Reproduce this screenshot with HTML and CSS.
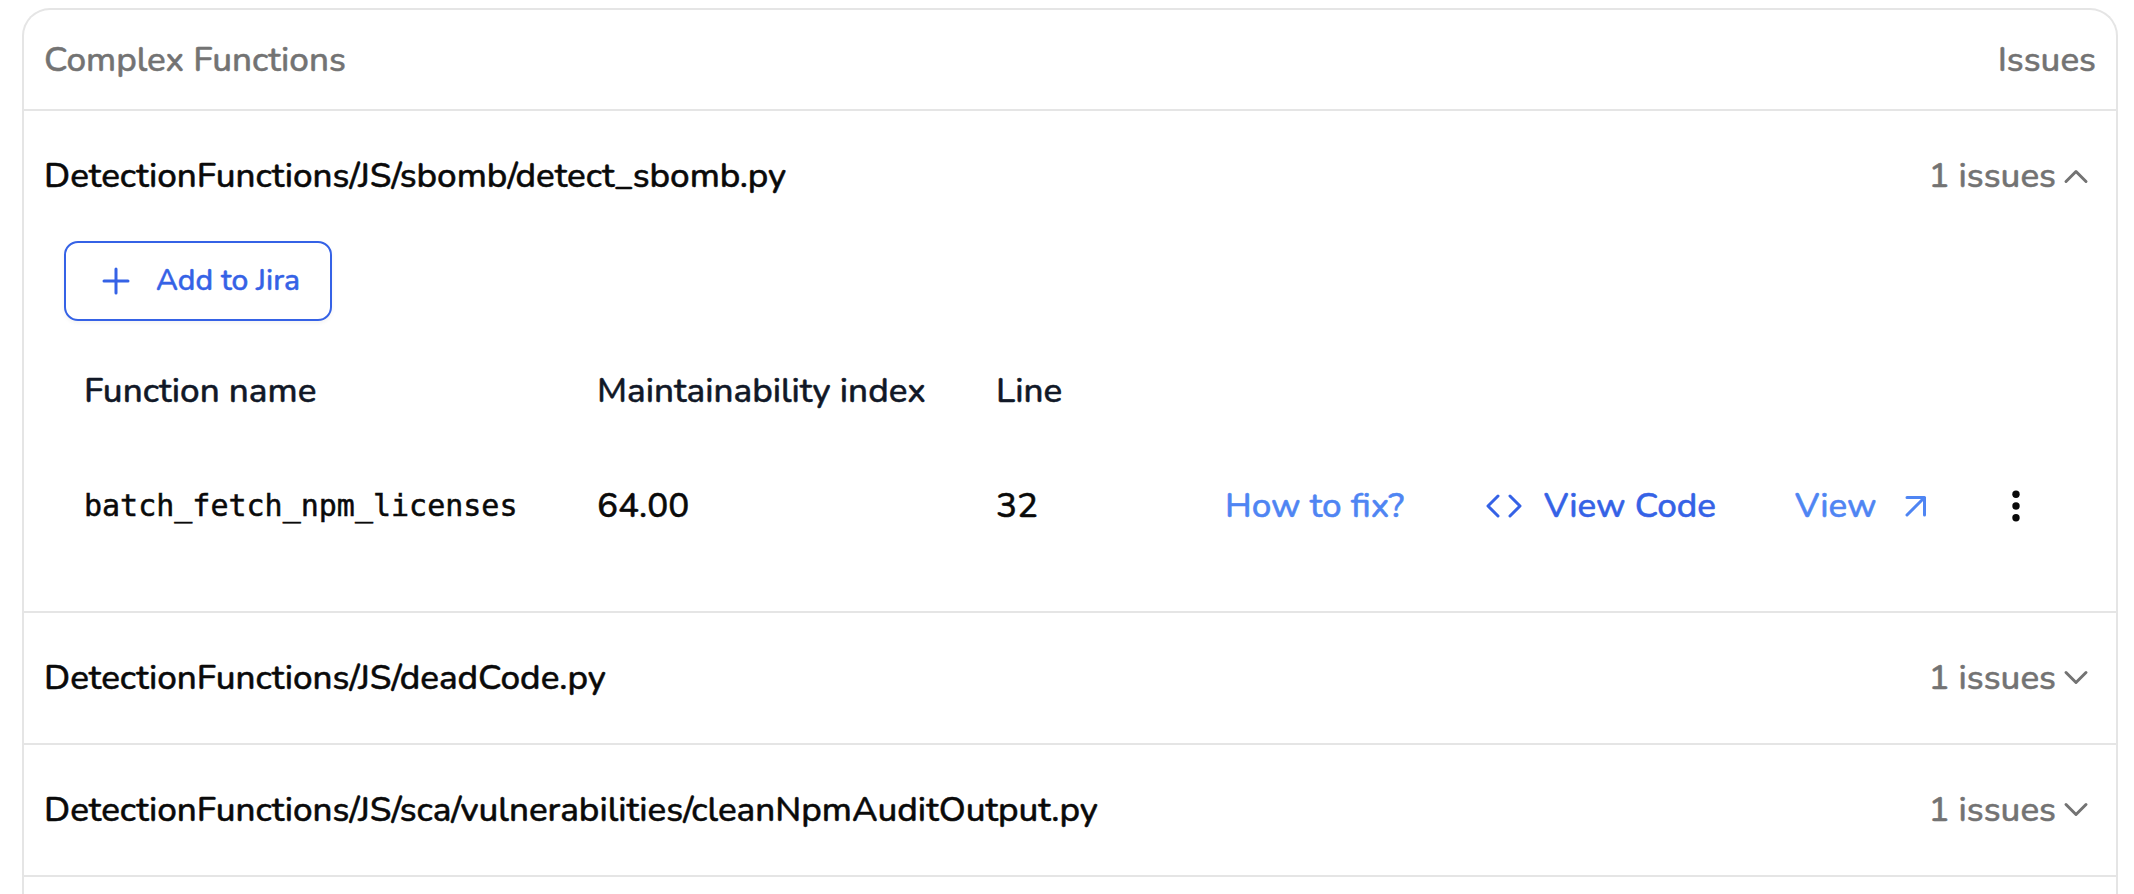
FILE: index.html
```html
<!DOCTYPE html>
<html lang="en">
<head>
    <meta charset="UTF-8">
    <meta name="viewport" content="width=device-width, initial-scale=1.0">
    <title>Complex Functions</title>
    <link rel="stylesheet" href="styles.css">
</head>
<body>
    <div class="card">
        <div class="card-header">
            <span>Complex Functions</span>
            <span>Issues</span>
        </div>

        <div class="file open">
            <div class="file-row">
                <span class="file-name">DetectionFunctions/JS/sbomb/detect_sbomb.py</span>
                <span class="issue-count">1 issues
                    <svg class="chevron" viewBox="0 0 32 32"><path d="M6 21.5 L16 11.5 L26 21.5"/></svg>
                </span>
            </div>
            <div class="file-body">
                <button class="jira-btn">
                    <svg class="plus" viewBox="0 0 28 28"><path d="M14 2V26M2 14H26"/></svg>
                    <span>Add to Jira</span>
                </button>
                <div class="grid grid-head">
                    <span>Function name</span>
                    <span>Maintainability index</span>
                    <span>Line</span>
                </div>
                <div class="grid grid-row">
                    <code>batch_fetch_npm_licenses</code>
                    <span>64.00</span>
                    <span>32</span>
                    <a class="link fix">How to fix?</a>
                    <a class="link code">
                        <svg class="code-icon" viewBox="0 0 38 26"><path d="M13 3L3 13L13 23M25 3L35 13L25 23"/></svg>
                        View Code
                    </a>
                    <a class="link view">View
                        <svg class="arrow" viewBox="0 0 22 22"><path d="M2 2.5H19.5V20M19.5 2.5L2 20"/></svg>
                    </a>
                    <svg class="dots" viewBox="0 0 8 32"><circle cx="4" cy="4.3" r="3.7"/><circle cx="4" cy="16" r="3.7"/><circle cx="4" cy="27.7" r="3.7"/></svg>
                </div>
            </div>
        </div>

        <div class="file">
            <div class="file-row">
                <span class="file-name">DetectionFunctions/JS/deadCode.py</span>
                <span class="issue-count">1 issues
                    <svg class="chevron" viewBox="0 0 32 32"><path d="M6 10.5 L16 20.5 L26 10.5"/></svg>
                </span>
            </div>
        </div>

        <div class="file">
            <div class="file-row">
                <span class="file-name">DetectionFunctions/JS/sca/vulnerabilities/cleanNpmAuditOutput.py</span>
                <span class="issue-count">1 issues
                    <svg class="chevron" viewBox="0 0 32 32"><path d="M6 10.5 L16 20.5 L26 10.5"/></svg>
                </span>
            </div>
        </div>
    </div>
</body>
</html>
```
FILE: styles.css
```css
* {
    box-sizing: border-box;
}

body {
    margin: 0;
    background-color: #fff;
    color: #0a0a0a;
    font-family: Nunito, Lato, sans-serif;
    font-size: 35px;
    font-weight: 500;
    line-height: 48px;
    white-space: nowrap;
    -webkit-text-stroke: 0.5px currentColor;
}

svg {
    display: block;
    flex: none;
    fill: none;
    stroke: currentColor;
    stroke-width: 3;
    stroke-linecap: round;
    stroke-linejoin: round;
}

.card {
    width: 2096px;
    height: 886px;
    margin: 8px 0 0 22px;
    border: 2px solid #e5e5e5;
    border-bottom: none;
    border-radius: 28px 28px 0 0;
}

.card-header {
    display: flex;
    justify-content: space-between;
    align-items: center;
    height: 101px;
    padding: 0 20px;
    border-bottom: 2px solid #e5e5e5;
    color: #737373;
}

.file {
    border-bottom: 2px solid #e5e5e5;
}

.file.open {
    height: 502px;
}

.file-row {
    display: flex;
    justify-content: space-between;
    align-items: center;
    height: 130px;
    padding: 0 24px 0 20px;
}

.issue-count {
    display: flex;
    align-items: center;
    gap: 4px;
    color: #737373;
}

.chevron {
    width: 32px;
    height: 32px;
}

.jira-btn {
    display: flex;
    align-items: center;
    gap: 26px;
    width: 268px;
    height: 80px;
    margin-left: 40px;
    padding: 0 0 0 36px;
    border: 2px solid #3562e6;
    border-radius: 14px;
    background-color: #fff;
    box-shadow: 0 2px 4px rgba(0, 0, 0, 0.05);
    color: #3562e6;
    font: inherit;
    font-size: 30px;
}

.plus {
    width: 28px;
    height: 28px;
}

.grid {
    display: grid;
    grid-template-columns: 513px 399px 229px 260px 310px 217px 8px;
    align-items: center;
    margin-left: 60px;
}

.grid-head {
    height: 96px;
    margin-top: 22px;
    color: #111827;
}

.grid-row {
    height: 134px;
}

code {
    font-family: Menlo, "DejaVu Sans Mono", monospace;
    font-size: 30px;
    font-weight: 400;
}

.link {
    display: flex;
    align-items: center;
    color: #4f85f3;
}

.link.code {
    gap: 21px;
    color: #3562e6;
}

.link.view {
    gap: 28px;
}

.code-icon {
    width: 38px;
    height: 26px;
}

.arrow {
    width: 22px;
    height: 22px;
}

.dots {
    width: 8px;
    height: 32px;
    fill: #0a0a0a;
    stroke: none;
}
```
